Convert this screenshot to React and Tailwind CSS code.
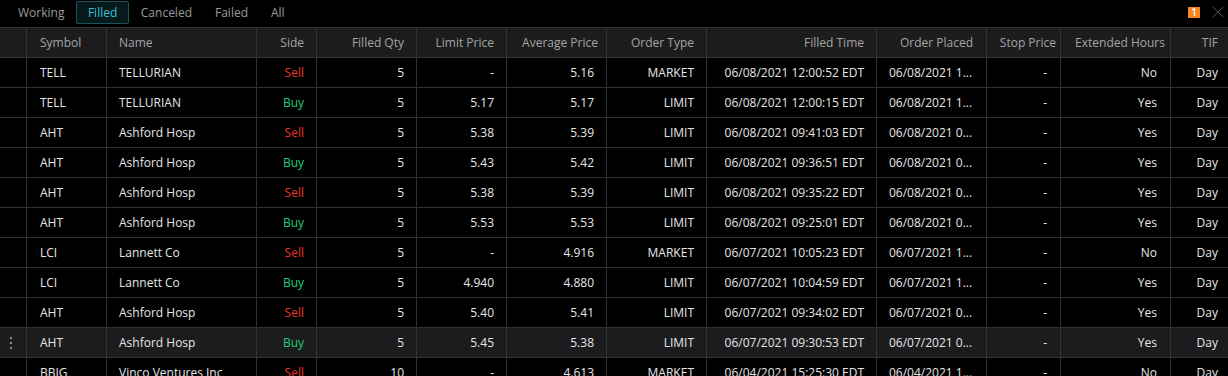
import { X } from 'lucide-react';

const cols = [
  { key: 'handle', label: '', align: 'left', hp: '', dp: '' },
  { key: 'symbol', label: 'Symbol', align: 'left', hp: 'pl-[13px]', dp: 'pl-[13px]' },
  { key: 'name', label: 'Name', align: 'left', hp: 'pl-3', dp: 'pl-3' },
  { key: 'side', label: 'Side', align: 'right', hp: 'pr-3', dp: 'pr-3' },
  { key: 'qty', label: 'Filled Qty', align: 'right', hp: 'pr-3', dp: 'pr-3' },
  { key: 'limit', label: 'Limit Price', align: 'right', hp: 'pr-3', dp: 'pr-3' },
  { key: 'avg', label: 'Average Price', align: 'right', hp: 'pr-[8px]', dp: 'pr-3' },
  { key: 'type', label: 'Order Type', align: 'right', hp: 'pr-3', dp: 'pr-3' },
  { key: 'filled', label: 'Filled Time', align: 'right', hp: 'pr-3', dp: 'pr-3' },
  { key: 'placed', label: 'Order Placed', align: 'right', hp: 'pr-[13px]', dp: 'pl-3', dataAlign: 'left' },
  { key: 'stop', label: 'Stop Price', align: 'right', hp: 'pr-[4px]', dp: 'pr-[13px]' },
  { key: 'ext', label: 'Extended Hours', align: 'right', hp: 'pr-[5px]', dp: 'pr-[13px]' },
  { key: 'tif', label: 'TIF', align: 'right', hp: 'pr-[10px]', dp: 'pr-[10px]' },
];

const orders = [
  ['TELL', 'TELLURIAN', 'Sell', '5', '-', '5.16', 'MARKET', '06/08/2021 12:00:52 EDT', '06/08/2021 1...', 'No'],
  ['TELL', 'TELLURIAN', 'Buy', '5', '5.17', '5.17', 'LIMIT', '06/08/2021 12:00:15 EDT', '06/08/2021 1...', 'Yes'],
  ['AHT', 'Ashford Hosp', 'Sell', '5', '5.38', '5.39', 'LIMIT', '06/08/2021 09:41:03 EDT', '06/08/2021 0...', 'Yes'],
  ['AHT', 'Ashford Hosp', 'Buy', '5', '5.43', '5.42', 'LIMIT', '06/08/2021 09:36:51 EDT', '06/08/2021 0...', 'Yes'],
  ['AHT', 'Ashford Hosp', 'Sell', '5', '5.38', '5.39', 'LIMIT', '06/08/2021 09:35:22 EDT', '06/08/2021 0...', 'Yes'],
  ['AHT', 'Ashford Hosp', 'Buy', '5', '5.53', '5.53', 'LIMIT', '06/08/2021 09:25:01 EDT', '06/08/2021 0...', 'Yes'],
  ['LCI', 'Lannett Co', 'Sell', '5', '-', '4.916', 'MARKET', '06/07/2021 10:05:23 EDT', '06/07/2021 1...', 'No'],
  ['LCI', 'Lannett Co', 'Buy', '5', '4.940', '4.880', 'LIMIT', '06/07/2021 10:04:59 EDT', '06/07/2021 1...', 'Yes'],
  ['AHT', 'Ashford Hosp', 'Sell', '5', '5.40', '5.41', 'LIMIT', '06/07/2021 09:34:02 EDT', '06/07/2021 0...', 'Yes'],
  ['AHT', 'Ashford Hosp', 'Buy', '5', '5.45', '5.38', 'LIMIT', '06/07/2021 09:30:53 EDT', '06/07/2021 0...', 'Yes'],
  ['BBIG', 'Vinco Ventures Inc', 'Sell', '10', '-', '4.613', 'MARKET', '06/04/2021 15:25:30 EDT', '06/04/2021 1...', 'No'],
];

const grid =
  'grid grid-cols-[27px_80px_150px_60px_100px_90px_100px_100px_170px_110px_74px_110px_57px]';

const tabs = ['Working', 'Filled', 'Canceled', 'Failed', 'All'];

function Kebab() {
  return (
    <svg width="4" height="14" viewBox="0 0 4 14" className="ml-[9px]">
      <circle cx="2" cy="2" r="1.2" fill="#8a8a8a" />
      <circle cx="2" cy="7" r="1.2" fill="#8a8a8a" />
      <circle cx="2" cy="12" r="1.2" fill="#8a8a8a" />
    </svg>
  );
}

export default function App() {
  return (
    <div
      className="w-[1228px] h-[376px] overflow-hidden bg-black text-[12px] text-[#e6e6e6]"
      style={{ fontFamily: '"Open Sans", "Noto Sans", sans-serif' }}
    >
      {/* tab bar */}
      <div className="h-[28px] flex items-start border-b border-[#323232]">
        <div className="flex pl-[6.5px] pt-[1px]">
          {tabs.map((t) => (
            <div
              key={t}
              className={
                t === 'Filled'
                  ? 'h-[23px] px-[11px] flex items-center rounded-[2px] border border-[#1d5458] bg-[#06191b] text-[#34c3dc]'
                  : 'h-[23px] px-[11.5px] flex items-center text-[#9b9b9b]'
              }
            >
              {t}
            </div>
          ))}
        </div>
        <div className="ml-auto flex items-center gap-[8px] pr-0 pt-[2px]">
          <div className="w-[12px] h-[11px] bg-[#f5851f] text-white text-[10px] leading-[11px] font-semibold flex items-center justify-center">
            1
          </div>
          <X size={20} strokeWidth={0.9} className="text-[#6f6f6f]" />
        </div>
      </div>

      {/* header row */}
      <div className={`${grid} h-[30px] bg-[#1c1c1d] border-b border-[#323232] text-[#a4a4a4]`}>
        {cols.map((c, i) => (
          <div
            key={c.key}
            className={`flex items-center whitespace-nowrap overflow-hidden ${
              i < cols.length - 1 ? 'border-r border-[#323232]' : ''
            } ${c.align === 'right' ? 'justify-end' : 'justify-start'} ${c.hp}`}
          >
            {c.label}
          </div>
        ))}
      </div>

      {/* rows */}
      {orders.map((o, r) => {
        const hover = r === 9;
        const values = ['', ...o.slice(0, 9), '-', o[9], 'Day'];
        return (
          <div
            key={r}
            className={`${grid} h-[30px] border-b border-[#323232] ${hover ? 'bg-[#1c1c1e]' : ''}`}
          >
            {cols.map((c, i) => {
              const align = c.dataAlign || c.align;
              let color = '';
              if (c.key === 'side') color = values[i] === 'Sell' ? 'text-[#e8362c]' : 'text-[#1ccf7c]';
              return (
                <div
                  key={c.key}
                  className={`flex items-center whitespace-nowrap overflow-hidden ${
                    i < cols.length - 1 ? 'border-r border-[#323232]' : ''
                  } ${align === 'right' ? 'justify-end' : 'justify-start'} ${c.dp} ${color}`}
                >
                  {c.key === 'handle' ? hover && <Kebab /> : values[i]}
                </div>
              );
            })}
          </div>
        );
      })}
    </div>
  );
}
